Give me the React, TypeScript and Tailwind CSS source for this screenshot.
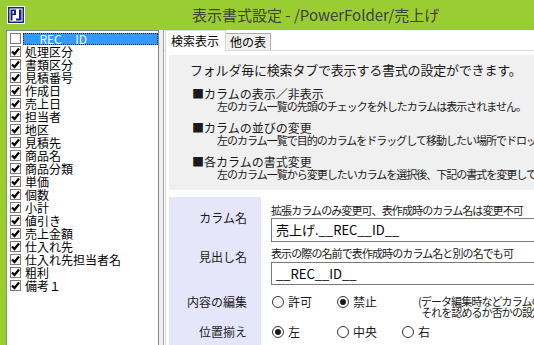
import { type FC } from 'react'

const FONT = { fontFamily: '"Noto Sans CJK JP", "Noto Sans", sans-serif' }

const COLUMNS: { name: string; checked: boolean }[] = [
  { name: '__REC__ID__', checked: false },
  { name: '処理区分', checked: true },
  { name: '書類区分', checked: true },
  { name: '見積番号', checked: true },
  { name: '作成日', checked: true },
  { name: '売上日', checked: true },
  { name: '担当者', checked: true },
  { name: '地区', checked: true },
  { name: '見積先', checked: true },
  { name: '商品名', checked: true },
  { name: '商品分類', checked: true },
  { name: '単価', checked: true },
  { name: '個数', checked: true },
  { name: '小計', checked: true },
  { name: '値引き', checked: true },
  { name: '売上金額', checked: true },
  { name: '仕入れ先', checked: true },
  { name: '仕入れ先担当者名', checked: true },
  { name: '粗利', checked: true },
  { name: '備考１', checked: true },
]

const SECTIONS = [
  { head: '■カラムの表示／非表示', body: '左のカラム一覧の先頭のチェックを外したカラムは表示されません。' },
  { head: '■カラムの並びの変更', body: '左のカラム一覧で目的のカラムをドラッグして移動したい場所でドロップしてください。' },
  { head: '■各カラムの書式変更', body: '左のカラム一覧から変更したいカラムを選択後、下記の書式を変更してください。' },
]

const Logo: FC = () => (
  <svg width="18" height="18" viewBox="0 0 18 18" aria-hidden="true">
    <rect x="0" y="0" width="18" height="18" fill="#ffffff" />
    <rect x="1" y="1" width="16" height="16" fill="#1a237e" />
    <rect x="2.5" y="2.5" width="13" height="13" fill="#ffffff" />
    {/* P */}
    <path d="M3.5 3.5h5.5v5.5h-3.5v5.5h-2z M5.5 5v2.5h1.5v-2.5z" fill="#1a237e" fillRule="evenodd" />
    {/* J */}
    <path d="M12 3.5h2.5v11h-5.5v-2h3z" fill="#1a237e" />
  </svg>
)

const CheckBox: FC<{ checked: boolean }> = ({ checked }) => (
  <span className="flex h-[11px] w-[11px] shrink-0 items-center justify-center border border-[#7a7a7a] bg-white">
    {checked && (
      <svg width="9" height="9" viewBox="0 0 9 9" aria-hidden="true">
        <path d="M1 4.5 L3.5 7 L8 1.5" fill="none" stroke="#000" strokeWidth="2.2" />
      </svg>
    )}
  </span>
)

const Radio: FC<{ label: string; checked?: boolean }> = ({ label, checked }) => (
  <div className="flex w-[65px] shrink-0 items-center gap-[4px]">
    <span className="flex h-[12px] w-[12px] items-center justify-center rounded-full border border-[#333333] bg-white">
      {checked && <span className="h-[6px] w-[6px] rounded-full bg-[#1a1a1a]" />}
    </span>
    <span className="text-[12px] leading-[16px] text-[#1a1a1a]">{label}</span>
  </div>
)

export default function App() {
  return (
    <div className="flex h-[345px] w-[534px] flex-col overflow-hidden bg-[#9acd32]" style={FONT}>
      {/* Title bar */}
      <div className="flex h-[30px] shrink-0 items-center pl-[7px]">
        <Logo />
        <span className="ml-[167px] whitespace-nowrap text-[15px] leading-[20px] text-[#404040]">
          表示書式設定 - /PowerFolder/売上げ
        </span>
      </div>

      <div className="flex min-h-0 flex-1 pl-[6px]">
        {/* Column list */}
        <div className="w-[153px] shrink-0 overflow-hidden border border-b-0 border-[#828790] bg-white pt-[1px]">
          {COLUMNS.map((c, i) => (
            <div key={c.name} className="flex h-[13px] items-center pl-[3px]">
              <CheckBox checked={c.checked} />
              {i === 0 ? (
                <span className="ml-[2px] flex h-[12px] flex-1 items-center border border-dotted border-[#222] bg-[#3399ff] pl-[2px] text-[12px] leading-[11px] text-white">
                  {c.name}
                </span>
              ) : (
                <span className="ml-[4px] whitespace-nowrap text-[12px] leading-[12px] text-black">{c.name}</span>
              )}
            </div>
          ))}
        </div>

        {/* Splitter */}
        <div className="w-[5px] shrink-0 border-r border-[#a0a0a0] bg-[#f0f0f0]" />

        {/* Right pane */}
        <div className="flex min-w-0 flex-1 flex-col bg-white">
          {/* Tabs */}
          <div className="flex h-[21px] shrink-0 items-end border-b border-[#d9d9d9] pl-[1px]">
            <div className="relative -mb-px h-[21px] w-[61px] border border-b-0 border-[#d9d9d9] bg-white pl-[5px] text-[12px] leading-[19px] text-black">
              検索表示
            </div>
            <div className="h-[17px] w-[45px] border border-b-0 border-l-0 border-[#adadad] bg-[#f0f0f0] pl-[4px] text-[12px] leading-[16px] text-black">
              他の表
            </div>
          </div>

          {/* Tab page */}
          <div className="ml-[1px] flex min-h-0 flex-1 flex-col border-l border-[#d9d9d9] pl-[3px] pt-[4px]">
            {/* Info panel */}
            <div className="h-[135px] shrink-0 overflow-hidden whitespace-nowrap bg-[#f0f0f0] pl-[21px] pt-[6px] text-[#1a1a1a]">
              <div className="text-[13px] leading-[18px] tracking-[-0.2px]">
                フォルダ毎に検索タブで表示する書式の設定ができます。
              </div>
              {SECTIONS.map(s => (
                <div key={s.head} className="mt-[8px] pl-[2px]">
                  <div className="text-[12px] leading-[13px]">{s.head}</div>
                  <div className="pl-[25px] text-[11px] leading-[13px] tracking-[-1px]">{s.body}</div>
                </div>
              ))}
            </div>

            {/* Form */}
            <div className="mt-[7px] flex flex-1 flex-col">
              {/* カラム名 */}
              <div className="flex">
                <div className="w-[92px] shrink-0 bg-[#e6e6fa] pr-[14px] pt-[13px] text-right text-[12px] leading-[16px] text-[#1a1a1a]">
                  カラム名
                </div>
                <div className="min-w-0 flex-1 pl-[10px] pt-[6px]">
                  <div className="whitespace-nowrap text-[11px] leading-[14px] tracking-[-0.9px] text-[#1a1a1a]">
                    拡張カラムのみ変更可、表作成時のカラム名は変更不可
                  </div>
                  <div className="mt-[1px] flex h-[24px] w-[290px] items-center border border-[#7a7a7a] bg-white pl-[4px] text-[13px] text-black">
                    売上げ.__REC__ID__
                  </div>
                </div>
              </div>

              {/* 見出し名 */}
              <div className="flex">
                <div className="w-[92px] shrink-0 bg-[#e6e6fa] pr-[14px] pt-[7px] text-right text-[12px] leading-[16px] text-[#1a1a1a]">
                  見出し名
                </div>
                <div className="min-w-0 flex-1 pl-[10px] pt-[4px]">
                  <div className="whitespace-nowrap text-[11px] leading-[14px] tracking-[-0.9px] text-[#1a1a1a]">
                    表示の際の名前で表作成時のカラム名と別の名でも可
                  </div>
                  <div className="mt-[2px] flex h-[23px] w-[290px] items-center border border-[#7a7a7a] bg-white pl-[4px] text-[13px] text-black">
                    __REC__ID__
                  </div>
                </div>
              </div>

              {/* 内容の編集 */}
              <div className="flex">
                <div className="h-[39px] w-[92px] shrink-0 bg-[#e6e6fa] pr-[14px] pt-[9px] text-right text-[12px] leading-[16px] text-[#1a1a1a]">
                  内容の編集
                </div>
                <div className="flex min-w-0 flex-1 items-start overflow-hidden pl-[11px] pt-[9px]">
                  <Radio label="許可" />
                  <Radio label="禁止" checked />
                  <div className="ml-[16px] mt-[2px] whitespace-nowrap text-[11px] leading-[11px] tracking-[-0.9px] text-[#1a1a1a]">
                    <div>(データ編集時などカラムの内容を変更する時</div>
                    <div className="pl-[3px]">それを認めるか否かの設定です)</div>
                  </div>
                </div>
              </div>

              {/* 位置揃え */}
              <div className="flex flex-1">
                <div className="w-[92px] shrink-0 bg-[#e6e6fa] pr-[14px] text-right text-[12px] leading-[16px] text-[#1a1a1a]">
                  位置揃え
                </div>
                <div className="flex min-w-0 flex-1 items-start pl-[11px]">
                  <Radio label="左" checked />
                  <Radio label="中央" />
                  <Radio label="右" />
                </div>
              </div>
            </div>
          </div>
        </div>
      </div>
    </div>
  )
}
